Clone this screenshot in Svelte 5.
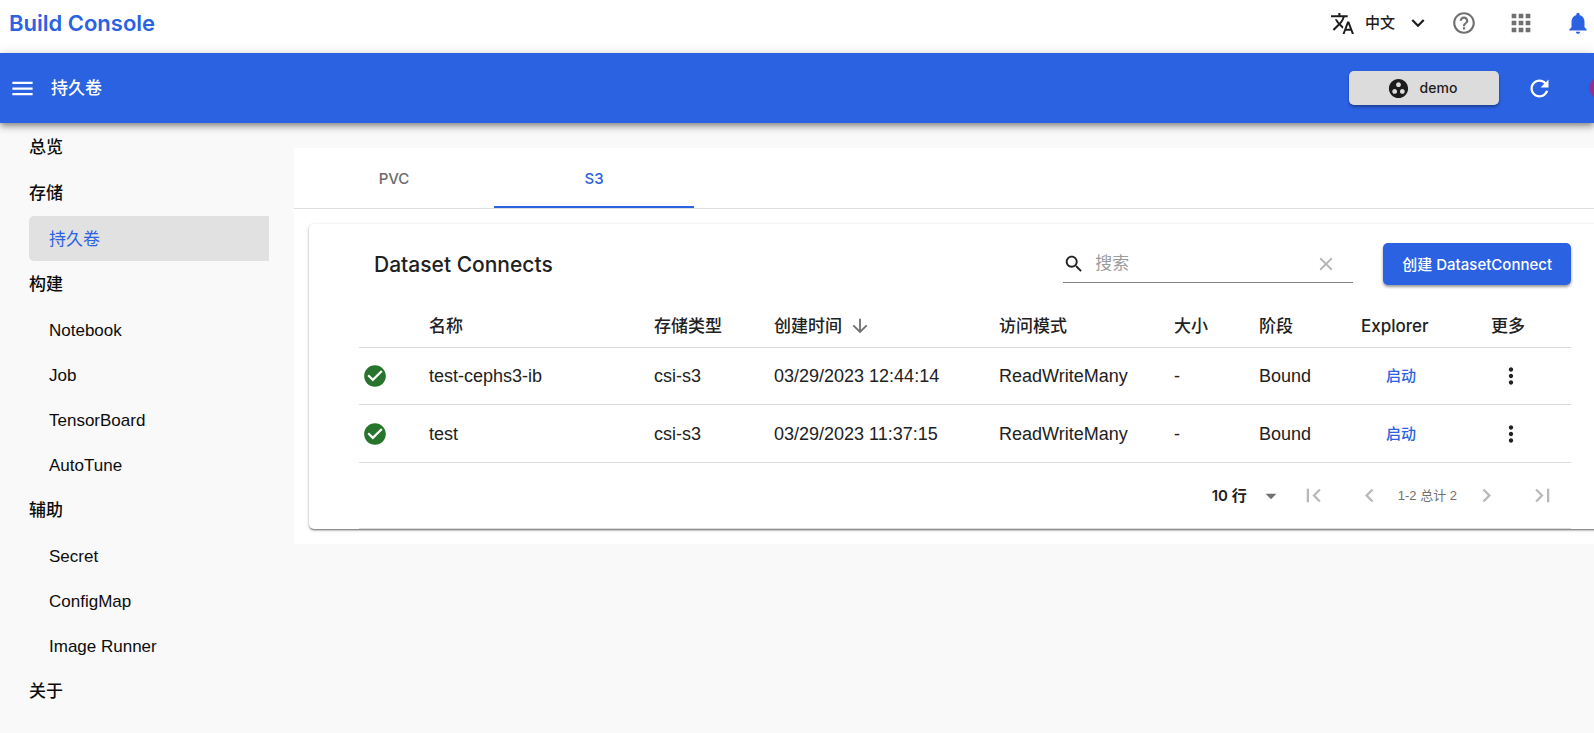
<script>
  const groups = [
    { title: '总览', items: [] },
    { title: '存储', items: ['持久卷'] },
    { title: '构建', items: ['Notebook', 'Job', 'TensorBoard', 'AutoTune'] },
    { title: '辅助', items: ['Secret', 'ConfigMap', 'Image Runner'] },
    { title: '关于', items: [] }
  ];

  const rows = [
    { name: 'test-cephs3-ib', type: 'csi-s3', created: '03/29/2023 12:44:14', mode: 'ReadWriteMany', size: '-', phase: 'Bound' },
    { name: 'test', type: 'csi-s3', created: '03/29/2023 11:37:15', mode: 'ReadWriteMany', size: '-', phase: 'Bound' }
  ];

  const icons = {
    translate: 'M12.87 15.07l-2.54-2.51.03-.03c1.74-1.94 2.98-4.17 3.71-6.53H17V4h-7V2H8v2H1v1.99h11.17C11.5 7.92 10.44 9.75 9 11.35 8.07 10.32 7.3 9.19 6.69 8h-2c.73 1.63 1.73 3.17 2.98 4.56l-5.09 5.02L4 19l5-5 3.11 3.11.76-2.04zM18.5 10h-2L12 22h2l1.12-3h4.75L21 22h2l-4.5-12zm-2.62 7l1.62-4.33L19.12 17h-3.24z',
    expand: 'M16.59 8.59L12 13.17 7.41 8.59 6 10l6 6 6-6z',
    help: 'M11 18h2v-2h-2v2zm1-16C6.48 2 2 6.48 2 12s4.48 10 10 10 10-4.48 10-10S17.52 2 12 2zm0 18c-4.41 0-8-3.59-8-8s3.59-8 8-8 8 3.59 8 8-3.59 8-8 8zm0-14c-2.21 0-4 1.79-4 4h2c0-1.1.9-2 2-2s2 .9 2 2c0 2-3 1.75-3 5h2c0-2.25 3-2.5 3-5 0-2.21-1.79-4-4-4z',
    apps: 'M4 8h4V4H4v4zm6 12h4v-4h-4v4zm-6 0h4v-4H4v4zm0-6h4v-4H4v4zm6 0h4v-4h-4v4zm6-10v4h4V4h-4zm-6 4h4V4h-4v4zm6 6h4v-4h-4v4zm0 6h4v-4h-4v4z',
    bell: 'M12 22c1.1 0 2-.9 2-2h-4c0 1.1.89 2 2 2zm6-6v-5c0-3.07-1.64-5.64-4.5-6.32V4c0-.83-.67-1.5-1.5-1.5s-1.5.67-1.5 1.5v.68C7.63 5.36 6 7.92 6 11v5l-2 2v1h16v-1l-2-2z',
    menu: 'M3 18h18v-2H3v2zm0-5h18v-2H3v2zm0-7v2h18V6H3z',
    group: 'M12 2C6.48 2 2 6.48 2 12s4.48 10 10 10 10-4.48 10-10S17.52 2 12 2zM8 17.5c-1.38 0-2.5-1.12-2.5-2.5s1.12-2.5 2.5-2.5 2.5 1.12 2.5 2.5-1.12 2.5-2.5 2.5zM9.5 8c0-1.38 1.12-2.5 2.5-2.5s2.5 1.12 2.5 2.5-1.12 2.5-2.5 2.5S9.5 9.38 9.5 8zm6.5 9.5c-1.38 0-2.5-1.12-2.5-2.5s1.12-2.5 2.5-2.5 2.5 1.12 2.5 2.5-1.12 2.5-2.5 2.5z',
    refresh: 'M17.65 6.35C16.2 4.9 14.21 4 12 4c-4.42 0-7.99 3.58-7.99 8s3.57 8 7.99 8c3.73 0 6.84-2.55 7.73-6h-2.08c-.82 2.33-3.04 4-5.65 4-3.31 0-6-2.69-6-6s2.69-6 6-6c1.66 0 3.14.69 4.22 1.78L13 11h7V4l-2.35 2.35z',
    search: 'M15.5 14h-.79l-.28-.27C15.41 12.59 16 11.11 16 9.5 16 5.91 13.09 3 9.5 3S3 5.91 3 9.5 5.91 16 9.5 16c1.61 0 3.09-.59 4.23-1.57l.27.28v.79l5 4.99L20.49 19l-4.99-5zm-6 0C7.01 14 5 11.99 5 9.5S7.01 5 9.5 5 14 7.01 14 9.5 11.99 14 9.5 14z',
    clear: 'M19 6.41L17.59 5 12 10.59 6.41 5 5 6.41 10.59 12 5 17.59 6.41 19 12 13.41 17.59 19 19 17.59 13.41 12z',
    down: 'M20 12l-1.41-1.41L13 16.17V4h-2v12.17l-5.58-5.59L4 12l8 8 8-8z',
    check: 'M12 2C6.48 2 2 6.48 2 12s4.48 10 10 10 10-4.48 10-10S17.52 2 12 2zm-2 15l-5-5 1.41-1.41L10 14.17l7.59-7.59L19 8l-9 9z',
    more: 'M12 8c1.1 0 2-.9 2-2s-.9-2-2-2-2 .9-2 2 .9 2 2 2zm0 2c-1.1 0-2 .9-2 2s.9 2 2 2 2-.9 2-2-.9-2-2-2zm0 6c-1.1 0-2 .9-2 2s.9 2 2 2 2-.9 2-2-.9-2-2-2z',
    caret: 'M7 10l5 5 5-5z',
    first: 'M18.41 16.59L13.82 12l4.59-4.59L17 6l-6 6 6 6zM6 6h2v12H6z',
    prev: 'M15.41 7.41L14 6l-6 6 6 6 1.41-1.41L10.83 12z',
    next: 'M10 6L8.59 7.41 13.17 12l-4.58 4.59L10 18l6-6z',
    last: 'M5.59 7.41L10.18 12l-4.59 4.59L7 18l6-6-6-6zM16 6h2v12h-2z'
  };

  let active = $state('持久卷');
  let tab = $state('S3');
  let query = $state('');
</script>

{#snippet icon(name, size)}
  <svg width={size} height={size} viewBox="0 0 24 24" fill="currentColor" aria-hidden="true"><path d={icons[name]} /></svg>
{/snippet}

<div class="page">
  <header class="topbar">
    <a class="brand" href="#home">Build Console</a>
    <div class="tools">
      <button class="language">{@render icon('translate', 25)}<span>中文</span>{@render icon('expand', 26)}</button>
      <button class="tool" aria-label="帮助">{@render icon('help', 26)}</button>
      <button class="tool" aria-label="应用">{@render icon('apps', 28)}</button>
      <button class="tool bell" aria-label="通知">{@render icon('bell', 26)}</button>
    </div>
  </header>

  <div class="appbar">
    <button class="menu" aria-label="菜单">{@render icon('menu', 27)}</button>
    <h1>持久卷</h1>
    <button class="project">{@render icon('group', 23)}<span>demo</span></button>
    <button class="refresh" aria-label="刷新">{@render icon('refresh', 27)}</button>
    <span class="avatar"></span>
  </div>

  <div class="body">
    <nav>
      {#each groups as group}
        <h2>{group.title}</h2>
        {#each group.items as item}
          <a href="#{item}" class:active={active === item} onclick={() => (active = item)}>{item}</a>
        {/each}
      {/each}
    </nav>

    <main>
      <div class="tabs" role="tablist">
        {#each ['PVC', 'S3'] as name}
          <button role="tab" aria-selected={tab === name} class:selected={tab === name} onclick={() => (tab = name)}>{name}</button>
        {/each}
      </div>

      <section class="card">
        <div class="heading">
          <h3>Dataset Connects</h3>
          <div class="search">
            {@render icon('search', 22)}
            <input type="text" aria-label="搜索" placeholder="搜索" bind:value={query} />
            <button aria-label="清除" onclick={() => (query = '')}>{@render icon('clear', 22)}</button>
          </div>
          <button class="create">创建 DatasetConnect</button>
        </div>

        <table>
          <colgroup>
            <col class="c-status" /><col /><col class="c-type" /><col class="c-created" /><col class="c-mode" />
            <col class="c-size" /><col class="c-phase" /><col class="c-explorer" /><col class="c-more" />
          </colgroup>
          <thead>
            <tr>
              <th></th>
              <th>名称</th>
              <th>存储类型</th>
              <th><span class="sorted">创建时间 {@render icon('down', 22)}</span></th>
              <th>访问模式</th>
              <th>大小</th>
              <th>阶段</th>
              <th>Explorer</th>
              <th>更多</th>
            </tr>
          </thead>
          <tbody>
            {#each rows as row}
              <tr>
                <td class="status">{@render icon('check', 26)}</td>
                <td>{row.name}</td>
                <td>{row.type}</td>
                <td>{row.created}</td>
                <td>{row.mode}</td>
                <td>{row.size}</td>
                <td>{row.phase}</td>
                <td class="explore"><button>启动</button></td>
                <td class="more"><button aria-label="更多">{@render icon('more', 26)}</button></td>
              </tr>
            {/each}
          </tbody>
        </table>

        <div class="pager">
          <div class="size">
            <select aria-label="每页行数"><option>10 行</option><option>20 行</option></select>
            {@render icon('caret', 26)}
          </div>
          <button disabled aria-label="首页">{@render icon('first', 27)}</button>
          <button disabled aria-label="上一页">{@render icon('prev', 27)}</button>
          <span>1-2 总计 2</span>
          <button disabled aria-label="下一页">{@render icon('next', 27)}</button>
          <button disabled aria-label="末页">{@render icon('last', 27)}</button>
        </div>
      </section>
    </main>
  </div>
</div>

<style>
  :global(body) {
    margin: 0;
    background: #f9f9f9;
  }

  .page {
    --blue: #2a62e2;
    --ink: #212121;
    --medium: Inter, 'Noto Sans CJK SC', sans-serif;
    min-height: 100vh;
    overflow: hidden;
    background: #f9f9f9;
    color: var(--ink);
    font: 17px/24px 'Liberation Sans', 'Noto Sans CJK SC', sans-serif;
  }

  .page :global(svg) {
    display: block;
    flex: none;
  }

  button {
    display: flex;
    align-items: center;
    justify-content: center;
    padding: 0;
    border: 0;
    background: none;
    color: inherit;
    font: inherit;
    cursor: pointer;
  }

  a {
    color: inherit;
    text-decoration: none;
  }

  h1,
  h2,
  h3 {
    margin: 0;
    font: 500 17px/24px var(--medium);
  }

  .topbar {
    display: flex;
    align-items: center;
    justify-content: space-between;
    height: 46px;
    padding: 0 3px 7px 9px;
    background: #fff;
  }

  .brand {
    color: var(--blue);
    font: 600 22px/28px var(--medium);
  }

  .tools {
    display: flex;
    align-items: center;
    gap: 30px;
    color: #707070;
  }

  .language {
    gap: 10px;
    color: #1c1c1c;
    font: 500 15px/24px var(--medium);
    margin-right: -10px;
  }

  .tool {
    min-width: 26px;
    height: 28px;
  }

  .bell {
    color: var(--blue);
  }

  .appbar {
    position: relative;
    z-index: 1;
    display: flex;
    align-items: center;
    height: 70px;
    padding-left: 9px;
    background: var(--blue);
    color: #fff;
    box-shadow: 0 2px 5px -1px rgba(0, 0, 0, 0.3), 0 5px 6px rgba(0, 0, 0, 0.18), 0 1px 12px rgba(0, 0, 0, 0.14);
  }

  .menu {
    margin-right: 15px;
  }

  .project {
    width: 150px;
    height: 34px;
    margin-left: auto;
    padding-right: 4px;
    gap: 10px;
    border-radius: 5px;
    background: #dcdcdc;
    color: #1c1c1c;
    font: 500 14px/20px var(--medium);
    box-shadow: 0 2px 3px rgba(0, 0, 0, 0.35);
  }

  .refresh {
    margin: 0 36px 0 27px;
  }

  .avatar {
    flex: none;
    width: 20px;
    height: 20px;
    margin-right: -15px;
    border-radius: 50%;
    background: #8e3292;
  }

  .body {
    display: flex;
    align-items: flex-start;
  }

  nav {
    flex: none;
    width: 240px;
    padding: 1px 25px 0 29px;
    color: #0c0c0c;
  }

  nav h2 {
    line-height: 46px;
  }

  nav a {
    display: block;
    padding: 2px 0 0 20px;
    line-height: 43px;
  }

  nav a.active {
    border-radius: 5px 0 0 5px;
    background: #e1e1e1;
    color: var(--blue);
  }

  main {
    flex: 1;
    min-width: 0;
    margin: 25px -42px 0 0;
    padding-bottom: 15px;
    background: #fff;
  }

  .tabs {
    display: flex;
    border-bottom: 1px solid #dedede;
  }

  .tabs button {
    width: 200px;
    height: 60px;
    box-sizing: border-box;
    padding-top: 2px;
    border: solid transparent;
    border-width: 2px 0;
    color: #6b6b6b;
    font: 500 15px/20px var(--medium);
  }

  .tabs button.selected {
    border-bottom-color: var(--blue);
    color: var(--blue);
  }

  .card {
    margin: 15px 15px 0;
    padding: 0 50px;
    border-radius: 5px;
    background: #fff;
    box-shadow: 0 2px 2px -1px rgba(0, 0, 0, 0.35), 0 1px 2px rgba(0, 0, 0, 0.25), 0 1px 4px rgba(0, 0, 0, 0.12);
  }

  .heading {
    display: flex;
    align-items: center;
    height: 80px;
    padding-left: 15px;
  }

  h3 {
    margin-right: auto;
    padding-top: 2px;
    font-size: 21px;
    line-height: 28px;
  }

  .search {
    display: flex;
    align-items: center;
    width: 290px;
    height: 36px;
    border-bottom: 1px solid #858585;
  }

  .search input {
    flex: 1;
    min-width: 0;
    margin-left: 10px;
    padding: 0;
    border: 0;
    outline: 0;
    background: none;
    color: inherit;
    font: inherit;
  }

  .search input::placeholder {
    color: #9c9c9c;
    opacity: 1;
  }

  .search button {
    margin-right: 16px;
    color: #b4b4b4;
  }

  .create {
    height: 42px;
    margin-left: 30px;
    padding: 2px 19px 0;
    border-radius: 5px;
    background: var(--blue);
    color: #fff;
    font: 500 15px/24px var(--medium);
    white-space: nowrap;
    box-shadow: 0 2px 3px rgba(0, 0, 0, 0.4);
  }

  table {
    width: 100%;
    border-collapse: separate;
    border-spacing: 0;
    table-layout: fixed;
  }

  .c-status { width: 70px; }
  .c-type { width: 120px; }
  .c-created { width: 225px; }
  .c-mode { width: 175px; }
  .c-size { width: 85px; }
  .c-phase { width: 102px; }
  .c-explorer { width: 130px; }
  .c-more { width: 80px; }

  th,
  td {
    height: 56px;
    padding: 0;
    border-bottom: 1px solid #dbdbdb;
    text-align: left;
    white-space: nowrap;
  }

  td {
    font-size: 18px;
  }

  tr:last-child td {
    height: 57px;
  }

  th {
    height: 43px;
    font: 500 17px/24px var(--medium);
  }

  .sorted {
    display: flex;
    align-items: center;
    gap: 7px;
  }

  .sorted :global(svg) {
    color: #707070;
  }

  td.status {
    padding-left: 3px;
    color: #27742c;
  }

  .explore button {
    margin-left: 25px;
    color: var(--blue);
    font: 500 15px/24px var(--medium);
  }

  .more button {
    margin-left: 7px;
  }

  .pager {
    display: flex;
    align-items: center;
    justify-content: flex-end;
    height: 65px;
    padding-right: 1px;
    border-bottom: 1px solid #dbdbdb;
    font-size: 13px;
    color: #707070;
  }

  .pager button {
    width: 56px;
    height: 56px;
    color: #b8b8b8;
  }

  .pager span {
    margin-right: 1px;
  }

  .size {
    display: flex;
    align-items: center;
    margin-right: 2px;
  }

  .size select {
    appearance: none;
    width: 46px;
    padding: 0;
    border: 0;
    background: none;
    color: var(--ink);
    font: 600 15px/24px var(--medium);
  }
</style>
